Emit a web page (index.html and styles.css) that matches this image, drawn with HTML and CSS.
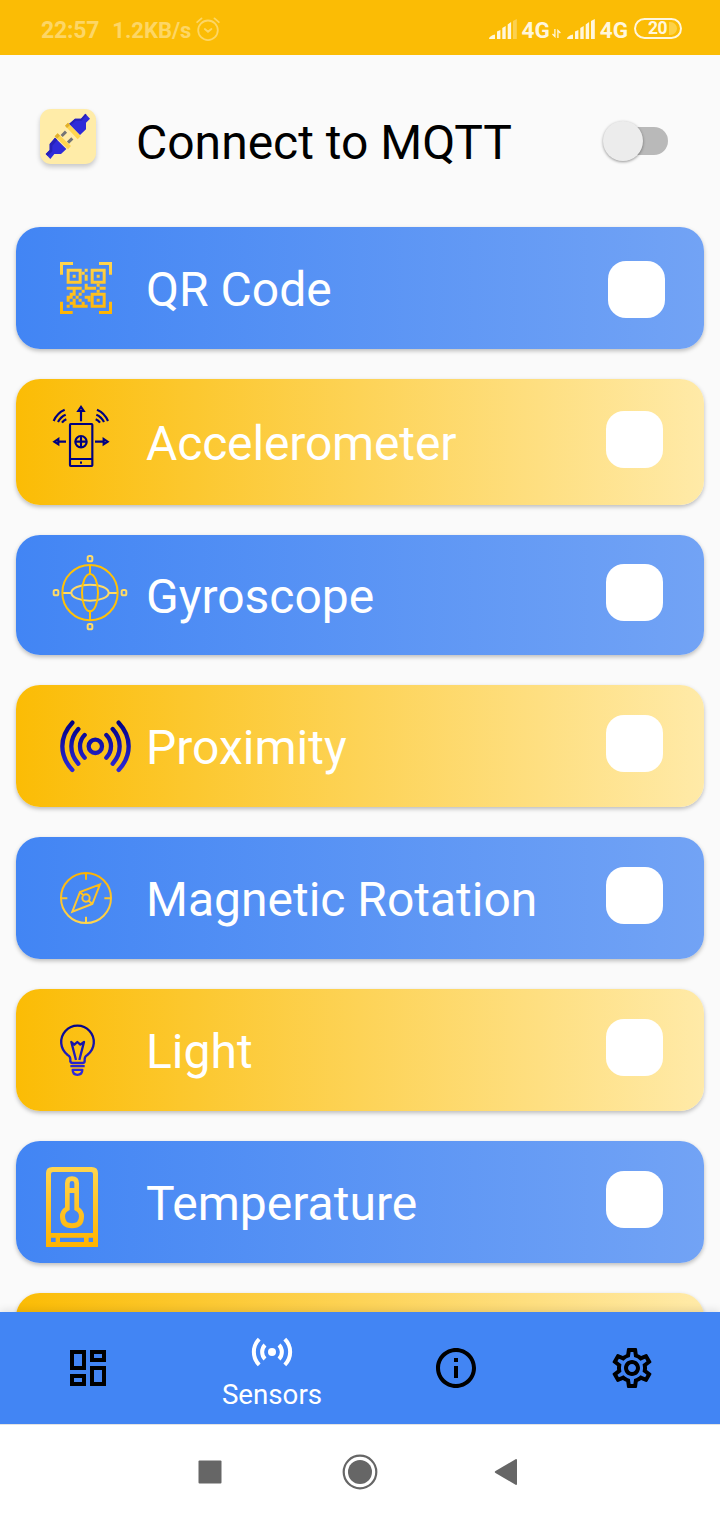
FILE: index.html
```
<!DOCTYPE html>
<html lang="en">
<head>
    <meta charset="UTF-8">
    <meta name="viewport" content="width=device-width, initial-scale=1.0">
    <title>Sensors</title>
    <link rel="stylesheet" href="styles.css">
</head>
<body>
    <!-- gradients shared by the icons -->
    <svg class="defs" width="0" height="0">
        <defs>
            <linearGradient id="goldCode" gradientUnits="userSpaceOnUse" x1="0" y1="66" x2="0" y2="222">
                <stop offset="0" stop-color="#ffd54f"/>
                <stop offset="1" stop-color="#ffb300"/>
            </linearGradient>
            <linearGradient id="goldDown" x1="0" y1="0" x2="0" y2="1">
                <stop offset="0" stop-color="#ffd54f"/>
                <stop offset="1" stop-color="#ffb300"/>
            </linearGradient>
            <linearGradient id="goldUp" x1="0" y1="0" x2="0" y2="1">
                <stop offset="0" stop-color="#ffb300"/>
                <stop offset="1" stop-color="#ffd54f"/>
            </linearGradient>
            <linearGradient id="navy" gradientUnits="userSpaceOnUse" x1="0" y1="62" x2="0" y2="216">
                <stop offset="0" stop-color="#000080"/>
                <stop offset="1" stop-color="#2f2bdc"/>
            </linearGradient>
        </defs>
    </svg>

    <header class="status-bar">
        <div class="status-left">
            <span class="clock">22:57</span>
            <span class="speed">1.2KB/s</span>
            <svg class="alarm" width="24" height="24" viewBox="0 0 24 24" fill="none" stroke="currentColor" stroke-width="1.8" stroke-linecap="round">
                <circle cx="12" cy="13.3" r="9.8"/>
                <path d="M1.2 5.2l4.3-3.8M22.8 5.2l-4.3-3.8M8.8 12l3.2 2.8 3.4-2.8"/>
            </svg>
        </div>
        <div class="status-right">
            <svg class="signal" width="29" height="20" viewBox="0 0 29 20" fill="currentColor">
                <path d="M0 20q0-3 6-4.5V20zM8 12.5l3.4-1.5v9H8zM13.3 9l3.4-2v13h-3.4zM18.7 5.5l3.4-2.5v17h-3.4z"/>
                <path opacity=".35" d="M24 2l3.8-2v20H24z"/>
            </svg>
            <span class="net">4G</span>
            <svg class="updown" width="9" height="9" viewBox="0 0 9 9" fill="none" stroke="currentColor" stroke-width="1.3">
                <path d="M2.9 0v7.5L.5 5M5.9 9V1.5L8.4 4"/>
            </svg>
            <svg class="signal second" width="29" height="20" viewBox="0 0 29 20" fill="currentColor">
                <path d="M0 20q0-3 6-4.5V20zM8 12.5l3.4-1.5v9H8zM13.3 9l3.4-2v13h-3.4zM18.7 5.5l3.4-2.5v17h-3.4zM24 2l3.8-2v20H24z"/>
            </svg>
            <span class="net">4G</span>
            <span class="battery">20<i></i></span>
        </div>
    </header>

    <main class="content">
        <div class="connect">
            <div class="plug">
                <svg width="56" height="55" viewBox="61 57 168 165">
                    <path fill="#2f2bd8" d="M197 71l14 15-12 12v20l-18 17-33-33 18-16h18z"/>
                    <path fill="#2721b8" d="M166 86h18l13-15 4 4-15 17h-18l-15 14-5-4z"/>
                    <path fill="#ffd54f" d="M145 98l38 41-9 9-38-41z"/>
                    <path fill="#e0b02f" d="M145 98l6 7-9 9-6-7z"/>
                    <path fill="#2f2bd8" d="M92 207l-14-15 12-12v-18l16-19 34 34-16 15h-20z"/>
                    <path fill="#2721b8" d="M78 192l12-12v-18l16-19 7 7-15 17v17l-14 14z"/>
                    <path fill="#ffd54f" d="M114 130l40 38-9 10-40-39z"/>
                    <path fill="#e0b02f" d="M114 130l7 7-9 9-7-7z"/>
                    <path stroke="#757575" stroke-width="9" d="M126 138l13-13M145 158l13-13"/>
                </svg>
            </div>
            <span class="connect-label">Connect to MQTT</span>
            <div class="switch"><span class="thumb"></span></div>
        </div>

        <div class="card blue qr">
            <svg class="icon" viewBox="-72 -39 384 366" fill="url(#goldCode)">
                <!-- frame corners and finder squares -->
                <path fill-rule="evenodd" d="M60 66h39v9H69v29h-9zM177 66h39v38h-9V75h-30zM60 185h9v28h29v9H60zM207 185h9v37h-39v-9h30z
                    M80 86h45v45H80zM89 95v27h27V95zM98 104h9v9h-9z
                    M152 86h45v45h-45zM161 95v27h27V95zM170 104h9v9h-9z
                    M152 158h45v45h-45zM161 167v27h27v-27zM170 176h9v9h-9z"/>
                <!-- data modules -->
                <path d="M134 86h9v9h-9zM125 95h9v9h-9zM134 104h9v18h-9zM134 131h9v9h-9zM134 140h34v9h-34zM170 131h9v9h-9zM179 140h18v9h-18zM170 149h9v9h-9z
                    M80 140h45v9H80zM98 149h9v18h-9zM89 158h9v18h-9zM80 167h9v18h-9zM125 149h9v9h-9zM116 158h9v9h-9zM107 167h9v9h-9zM116 176h9v9h-9z
                    M98 176h9v27h-9zM89 185h9v9h-9zM80 194h9v9h-9zM107 194h36v9h-36zM125 185h9v9h-9zM134 167h18v9h-18zM143 176h9v9h-9z"/>
            </svg>
            <span class="name">QR Code</span>
            <span class="check"></span>
        </div>

        <div class="card yellow accelerometer">
            <svg class="icon" viewBox="-72 -33 384 378" fill="none" stroke="#000080" stroke-width="6.5">
                <rect x="90" y="102" width="67" height="126" rx="2"/>
                <path d="M90 207h67M120 218h6"/>
                <circle cx="123" cy="155" r="17"/>
                <path d="M123 138v34M106 155h34M123 94V65M115 63h16l-8-12zM78 155H57M55 147v16l-12-8zM165 155h24M191 147v16l12-8z"/>
                <path d="M41 93q10-24 33-34M54 96q8-16 23-22M66 98q5-7 13-10M204 93q-10-24-33-34M192 96q-8-16-23-22M180 98q-5-7-13-10"/>
            </svg>
            <span class="name">Accelerometer</span>
            <span class="check"></span>
        </div>

        <div class="card blue gyroscope">
            <svg class="icon" viewBox="-72 -30 384 360" fill="none" stroke="#ffc107" stroke-width="6">
                <g stroke="#ffdb66">
                    <ellipse cx="150" cy="143" rx="56" ry="24"/>
                    <rect x="143" y="33" width="14" height="16" rx="5"/>
                    <rect x="143" y="237" width="14" height="16" rx="5"/>
                    <rect x="41" y="135" width="14" height="16" rx="5"/>
                    <rect x="245" y="135" width="14" height="16" rx="5"/>
                    <path d="M67 144h27M206 144h27"/>
                </g>
                <circle cx="150" cy="143" r="83"/>
                <ellipse cx="150" cy="143" rx="24" ry="56"/>
                <path d="M150 60v28M150 199v28"/>
            </svg>
            <span class="name">Gyroscope</span>
            <span class="check"></span>
        </div>

        <div class="card yellow">
            <svg class="icon" viewBox="-72 -45 384 366" fill="none" stroke="url(#navy)" stroke-width="13" stroke-linecap="round">
                <circle cx="166" cy="139" r="20"/>
                <path d="M97 68q-30 32-30 71t30 71M115 87q-21 23-21 52t21 52M134 105q-14 14-14 34t14 34
                    M236 68q30 32 30 71t-30 71M218 87q21 23 21 52t-21 52M199 105q14 14 14 34t-14 34"/>
            </svg>
            <span class="name">Proximity</span>
            <span class="check"></span>
        </div>

        <div class="card blue">
            <svg class="icon" viewBox="-72 411 384 366" fill="none" stroke="url(#goldUp)" stroke-width="6">
                <path d="M63 594a75 75 0 1 0 150 0a75 75 0 1 0-150 0M138 519v20M138 650v19M63 595h19M193 595h20
                    M180 553l-60 23-23 59 60-23zM127 594a11 11 0 1 0 22 0a11 11 0 1 0-22 0M120 576l11 11M146 602l11 10"/>
            </svg>
            <span class="name">Magnetic Rotation</span>
            <span class="check"></span>
        </div>

        <div class="card yellow">
            <svg class="icon" viewBox="-72 -33 384 366" fill="none" stroke="url(#navy)" stroke-width="7" stroke-linejoin="round">
                <path d="M91 186v-8q0-9-8-13a49 49 0 1 1 59 0q-8 4-8 13v5q0 6-6 6H97q-5 0-6-6"/>
                <path d="M108 180l-14-54 9 8 9-8 9 8 11-8-14 54M91 198.500h43M98 209.500h29q0 15-15 15-14 0-14-15z"/>
            </svg>
            <span class="name">Light</span>
            <span class="check"></span>
        </div>

        <div class="card blue">
            <svg class="icon" viewBox="-72 423 384 366">
                <path fill="url(#goldDown)" fill-rule="evenodd" d="M18 741V520q0-19 19-19h118q19 0 19 19v221zM33 699h126V522q0-6-6-6H39q-6 0-6 6zM33 713v13h14v-13zM60 713v13h72v-13zM146 713v13h13v-13z
                    M75 622v-72q0-21 21-21t21 21v72q15 10 15 27 0 36-36 36t-36-36q0-17 15-27zM89 564h14v-14q0-7-7-7t-7 7zM89 579v51q-14 6-14 19 0 21 21 21t21-21q0-13-14-19v-51z"/>
            </svg>
            <span class="name">Temperature</span>
            <span class="check"></span>
        </div>

        <div class="card yellow"></div>
    </main>

    <nav class="tabs">
        <a class="tab">
            <svg width="48" height="48" viewBox="0 0 24 24"><path d="M19 5v2h-4V5h4M9 5v6H5V5h4m10 8v6h-4v-6h4M9 17v2H5v-2h4M21 3h-8v6h8V3zM11 3H3v10h8V3zm10 8h-8v10h8V11zm-10 4H3v6h8v-6z"/></svg>
        </a>
        <a class="tab active">
            <svg width="48" height="48" viewBox="0 0 24 24" fill="none" stroke="#fff" stroke-width="2">
                <circle cx="12" cy="12" r="2" fill="#fff" stroke="none"/>
                <path d="M5.600 5.600a9 9 0 0 0 0 12.800M18.400 5.600a9 9 0 0 1 0 12.800M8.500 8.500a5 5 0 0 0 0 7M15.500 8.500a5 5 0 0 1 0 7"/>
            </svg>
            <span>Sensors</span>
        </a>
        <a class="tab">
            <svg width="48" height="48" viewBox="0 0 24 24"><path d="M11 7h2v2h-2zm0 4h2v6h-2zm1-9C6.480 2 2 6.480 2 12s4.480 10 10 10 10-4.480 10-10S17.520 2 12 2zm0 18c-4.410 0-8-3.590-8-8s3.590-8 8-8 8 3.590 8 8-3.590 8-8 8z"/></svg>
        </a>
        <a class="tab">
            <svg width="48" height="48" viewBox="0 0 24 24"><path d="M19.430 12.980c.04-.32.07-.64.07-.98 0-.34-.03-.66-.07-.98l2.110-1.650c.19-.15.24-.42.12-.64l-2-3.460c-.09-.16-.26-.25-.44-.25-.06 0-.12.01-.17.03l-2.490 1c-.52-.4-1.080-.73-1.690-.98l-.38-2.650C14.460 2.180 14.250 2 14 2h-4c-.25 0-.46.18-.49.42l-.38 2.650c-.61.25-1.170.59-1.690.98l-2.490-1c-.06-.02-.12-.03-.18-.03-.17 0-.34.09-.43.25l-2 3.460c-.13.22-.07.49.12.64l2.110 1.650c-.04.32-.07.65-.07.98 0 .33.03.66.07.98l-2.110 1.650c-.19.15-.24.42-.12.64l2 3.460c.09.16.26.25.44.25.06 0 .12-.01.17-.03l2.490-1c.52.4 1.080.73 1.690.98l.38 2.650c.03.24.24.42.49.42h4c.25 0 .46-.18.49-.42l.38-2.650c.61-.25 1.170-.59 1.690-.98l2.490 1c.06.02.12.03.18.03.17 0 .34-.09.43-.25l2-3.460c.12-.22.07-.49-.12-.64l-2.110-1.650zm-1.980-1.710c.04.31.05.52.05.73 0 .21-.02.43-.05.73l-.14 1.130.89.7 1.080.84-.7 1.210-1.270-.51-1.040-.42-.9.68c-.43.32-.84.56-1.250.73l-1.060.43-.16 1.130-.2 1.350h-1.400l-.19-1.350-.16-1.130-1.060-.43c-.43-.18-.83-.41-1.230-.71l-.91-.7-1.060.43-1.270.51-.7-1.210 1.080-.84.89-.7-.14-1.130c-.03-.31-.05-.54-.05-.74s.02-.43.05-.73l.14-1.130-.89-.7-1.080-.84.7-1.210 1.270.51 1.040.42.9-.68c.43-.32.84-.56 1.250-.73l1.060-.43.16-1.130.2-1.350h1.390l.19 1.350.16 1.130 1.060.43c.43.18.83.41 1.230.71l.91.7 1.060-.43 1.270-.51.7 1.210-1.070.85-.89.7.14 1.130zM12 8c-2.210 0-4 1.790-4 4s1.790 4 4 4 4-1.790 4-4-1.790-4-4-4zm0 6c-1.100 0-2-.9-2-2s.9-2 2-2 2 .9 2 2-.9 2-2 2z"/></svg>
        </a>
    </nav>

    <footer class="system-bar">
        <svg width="24" height="24" viewBox="0 0 24 24"><rect x=".5" y=".5" width="23" height="23" rx="1"/></svg>
        <svg width="36" height="36" viewBox="0 0 36 36"><circle cx="18" cy="18" r="16.300" fill="none" stroke="#666" stroke-width="2.200"/><circle cx="18" cy="18" r="12"/></svg>
        <svg width="24" height="28" viewBox="0 0 24 28"><path d="M22 1q1 0 1 1v24q0 1-1 1L1.500 15q-1.500-1 0-2z"/></svg>
    </footer>
</body>
</html>
```

FILE: styles.css
```
* {
    box-sizing: border-box;
}
body {
    margin: 0;
    width: 720px;
    height: 1520px;
    display: flex;
    flex-direction: column;
    overflow: hidden;
    font-family: Roboto, sans-serif;
    background-color: #fafafa;
}
svg {
    display: block;
    flex-shrink: 0;
}
.defs {
    position: absolute;
}

/* status bar */
.status-bar {
    height: 55px;
    flex-shrink: 0;
    padding: 5px 38px 0 41px;
    display: flex;
    align-items: center;
    justify-content: space-between;
    background-color: #fbbc05;
    font-size: 23px;
    font-weight: bold;
}
.status-left, .status-right {
    display: flex;
    align-items: center;
}
.status-left {
    color: #fdd665;
}
.clock {
    margin-right: 13px;
    letter-spacing: -0.2px;
}
.speed {
    font-size: 22px;
}
.alarm {
    margin-left: 5px;
    margin-top: -3px;
}
.status-right {
    color: #fff6dc;
}
.net {
    font-size: 22.5px;
}
.signal {
    margin-top: -2px;
    margin-right: 4px;
}
.second {
    margin-left: 6px;
}
.updown {
    margin-left: 2px;
    margin-top: 7px;
}
.battery {
    width: 48px;
    height: 21px;
    margin: -3px 0 0 6px;
    padding-left: 12px;
    border: 2px solid #fff6dc;
    border-radius: 11px;
    display: flex;
    align-items: center;
    font-size: 17.5px;
    line-height: 17px;
    letter-spacing: -0.5px;
}
.battery i {
    width: 8px;
    height: 13px;
    margin-left: 2px;
    border-radius: 0 7px 7px 0;
    background-color: #fdd147;
}

/* sensor list */
.content {
    height: 1257px;
    flex-shrink: 0;
    padding: 0 16px;
    overflow: hidden;
    display: flex;
    flex-direction: column;
    gap: 30px;
}
.connect {
    height: 142px;
    flex-shrink: 0;
    padding: 54px 36px 0 24px;
    display: flex;
    align-items: flex-start;
}
.plug {
    width: 56px;
    height: 55px;
    border-radius: 11px;
    background-color: #ffeca8;
    box-shadow: 0 3px 5px rgba(0,0,0,0.2);
}
.connect-label {
    margin-left: 40px;
    margin-top: 6px;
    font-size: 48px;
    line-height: 56px;
}
.switch {
    width: 60px;
    height: 28px;
    margin-left: auto;
    margin-top: 18px;
    border-radius: 14px;
    background-color: #b9b9b9;
    display: flex;
    align-items: center;
}
.thumb {
    width: 40px;
    height: 40px;
    margin-left: -5px;
    border-radius: 50%;
    background-color: #ececec;
    box-shadow: 0 1px 3px rgba(0,0,0,0.4);
}
.card {
    height: 122px;
    flex-shrink: 0;
    display: flex;
    align-items: center;
    border-radius: 24px;
    box-shadow: 0 2px 4px rgba(0,0,0,0.25);
    color: #fff;
}
.blue {
    background: linear-gradient(to right, #4285f4, #72a3f5);
}
.yellow {
    background: linear-gradient(to right, #fbbc05, #ffeaa8);
}
.icon {
    width: 128px;
    height: 100%;
}
.name {
    margin-top: 3px;
    margin-left: 2px;
    font-size: 48px;
    line-height: 56px;
}
.check {
    width: 57px;
    height: 57px;
    margin: 30px 41px 0 auto;
    align-self: flex-start;
    border-radius: 18px;
    background-color: #fff;
}
.qr .check {
    margin-top: 34px;
    margin-right: 39px;
}
.accelerometer {
    height: 126px;
}
.accelerometer .name {
    letter-spacing: -0.15px;
}
.accelerometer .check {
    margin-top: 32px;
}
.gyroscope {
    height: 120px;
}
.gyroscope .check {
    margin-top: 29px;
}

/* bottom navigation */
.tabs {
    height: 112px;
    flex-shrink: 0;
    display: grid;
    grid-template-columns: 176px 192px 176px 176px;
    background-color: #4285f4;
    box-shadow: 0 -2px 8px rgba(0,0,0,0.1);
}
.tab {
    display: flex;
    flex-direction: column;
    align-items: center;
    justify-content: center;
}
.active {
    justify-content: flex-start;
    padding-top: 16px;
    color: #fff;
    font-size: 27.7px;
    line-height: 38px;
}

/* android buttons */
.system-bar {
    height: 96px;
    display: flex;
    align-items: center;
    padding-left: 198px;
    padding-bottom: 1px;
    border-top: 1px solid #e3e3e3;
    background-color: #fff;
    fill: #666;
}
.system-bar svg:nth-child(2) {
    margin-left: 120px;
    margin-right: 116px;
}
```
